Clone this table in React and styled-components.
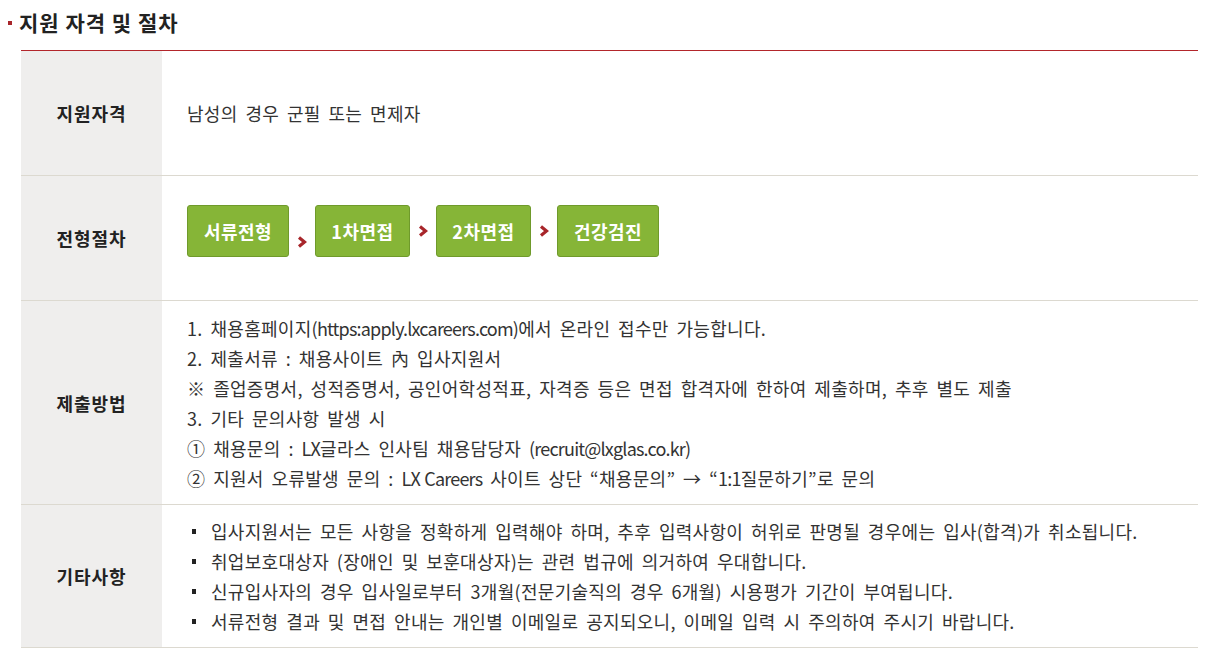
import React from "react";
import styled, { createGlobalStyle } from "styled-components";

const GlobalStyle = createGlobalStyle`
  html, body {
    margin: 0;
    padding: 0;
    background: #fff;
  }
  body {
    font-family: "Noto Sans CJK KR", "Noto Sans", sans-serif;
    color: #333;
  }
`;

const Wrap = styled.div`
  width: 1213px;
  padding: 7px 15px 0 8px;
  box-sizing: border-box;
`;

const Title = styled.h3`
  margin: 0 0 13px;
  display: flex;
  align-items: center;
  gap: 7px;
  font-size: 21px;
  font-weight: 700;
  color: #222;
  line-height: 30px;
  letter-spacing: 1px;

  &::before {
    content: "";
    width: 4px;
    height: 4px;
    background: #a8262b;
    margin-top: 2px;
  }
`;

const Table = styled.div`
  margin-left: 13px;
  border-top: 1px solid #b3262b;
  display: grid;
  grid-template-columns: 141px 1fr;
`;

const Head = styled.div`
  background: #efeeed;
  border-bottom: 1px solid #dcd9d0;
  display: flex;
  align-items: center;
  justify-content: center;
  font-size: 18px;
  font-weight: 700;
  letter-spacing: 1px;
  color: #222;
  height: ${(p) => p.$h}px;
  box-sizing: border-box;
`;

const Cell = styled.div`
  border-bottom: 1px solid #dcd9d0;
  padding: 0 0 0 25px;
  display: flex;
  flex-direction: column;
  justify-content: center;
  font-size: 18px;
  letter-spacing: 0.3px;
  word-spacing: 3.5px;
  color: #333;
  height: ${(p) => p.$h}px;
  box-sizing: border-box;
`;

// latin runs sit a little tighter than the hangul around them
const En = styled.span`
  letter-spacing: -0.8px;
  word-spacing: 1px;
`;

const Steps = styled.div`
  display: flex;
  align-items: center;
  margin-bottom: 14px;
  word-spacing: 0;
`;

const Step = styled.div`
  height: 52px;
  box-sizing: border-box;
  background: #86b537;
  border: 1px solid #6f9a2b;
  border-radius: 3px;
  color: #fff;
  font-weight: 700;
  font-size: 18px;
  letter-spacing: 0.5px;
  display: flex;
  align-items: center;
  justify-content: center;
  width: ${(p) => p.$w}px;
`;

const Arrow = styled.span`
  width: 26px;
  display: flex;
  justify-content: center;
  margin-top: ${(p) => (p.$low ? "21px" : "0")};
  svg {
    display: block;
  }
`;

const Lines = styled.div`
  display: flex;
  flex-direction: column;
  line-height: 30px;
`;

const Bullets = styled.ul`
  list-style: none;
  margin: 0;
  padding: 0 0 0 5px;
  line-height: 30px;
`;

const Bullet = styled.li`
  display: flex;
  align-items: center;

  &::before {
    content: "";
    width: 4px;
    height: 5px;
    background: #222;
    margin-right: 15px;
  }
`;

const Chev = () => (
  <svg width="10" height="12" viewBox="0 0 10 12">
    <path d="M2 1.5 L7.5 6 L2 10.5" fill="none" stroke="#a8262b" strokeWidth="3.2" />
  </svg>
);

const steps = [
  { label: "서류전형", w: 102 },
  { label: "1차면접", w: 95 },
  { label: "2차면접", w: 95 },
  { label: "건강검진", w: 102 },
];

export default function App() {
  return (
    <Wrap>
      <GlobalStyle />
      <Title>지원 자격 및 절차</Title>
      <Table>
        <Head $h={125}>지원자격</Head>
        <Cell $h={125}>남성의 경우 군필 또는 면제자</Cell>

        <Head $h={125}>전형절차</Head>
        <Cell $h={125}>
          <Steps>
            {steps.map((s, i) => (
              <React.Fragment key={s.label}>
                {i > 0 && (
                  <Arrow $low={i === 1}>
                    <Chev />
                  </Arrow>
                )}
                <Step $w={s.w}>{s.label}</Step>
              </React.Fragment>
            ))}
          </Steps>
        </Cell>

        <Head $h={204}>제출방법</Head>
        <Cell $h={204}>
          <Lines>
            <span>1. 채용홈페이지<En>(https:apply.lxcareers.com)</En>에서 온라인 접수만 가능합니다.</span>
            <span>2. 제출서류 : 채용사이트 內 입사지원서</span>
            <span>※ 졸업증명서, 성적증명서, 공인어학성적표, 자격증 등은 면접 합격자에 한하여 제출하며, 추후 별도 제출</span>
            <span>3. 기타 문의사항 발생 시</span>
            <span>① 채용문의 : <En>LX</En>글라스 인사팀 채용담당자 <En>(recruit@lxglas.co.kr)</En></span>
            <span>② 지원서 오류발생 문의 : <En>LX Careers</En> 사이트 상단 “채용문의” → “<En>1:1</En>질문하기”로 문의</span>
          </Lines>
        </Cell>

        <Head $h={143}>기타사항</Head>
        <Cell $h={143}>
          <Bullets>
            <Bullet>입사지원서는 모든 사항을 정확하게 입력해야 하며, 추후 입력사항이 허위로 판명될 경우에는 입사(합격)가 취소됩니다.</Bullet>
            <Bullet>취업보호대상자 (장애인 및 보훈대상자)는 관련 법규에 의거하여 우대합니다.</Bullet>
            <Bullet>신규입사자의 경우 입사일로부터 3개월(전문기술직의 경우 6개월) 시용평가 기간이 부여됩니다.</Bullet>
            <Bullet>서류전형 결과 및 면접 안내는 개인별 이메일로 공지되오니, 이메일 입력 시 주의하여 주시기 바랍니다.</Bullet>
          </Bullets>
        </Cell>
      </Table>
    </Wrap>
  );
}
